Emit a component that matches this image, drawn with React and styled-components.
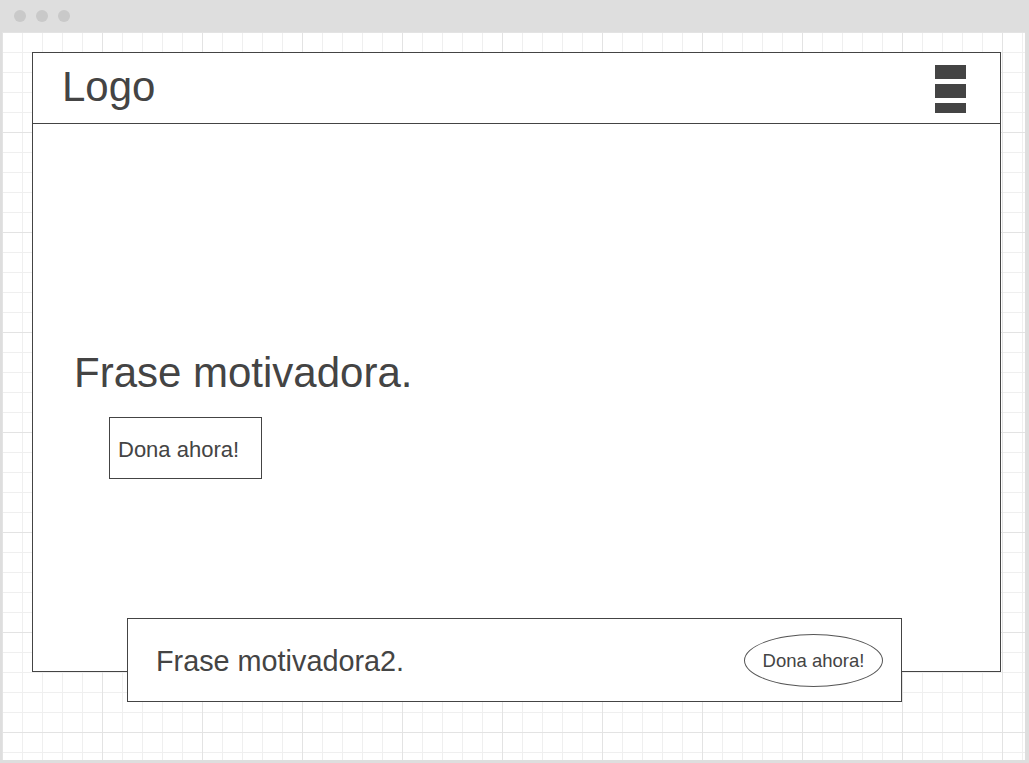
import React from 'react';
import styled, { createGlobalStyle } from 'styled-components';

const GlobalStyle = createGlobalStyle`
  html, body {
    margin: 0;
    padding: 0;
    background: #fff;
  }
  body {
    font-family: 'Liberation Sans', Arial, sans-serif;
    color: #444;
  }
`;

const Window = styled.div`
  width: 1029px;
  height: 763px;
  display: flex;
  flex-direction: column;
  box-sizing: border-box;
  overflow: hidden;
`;

const TitleBar = styled.div`
  height: 32px;
  flex-shrink: 0;
  background: #dedede;
  display: flex;
  align-items: center;
  gap: 10px;
  padding-left: 14px;
`;

const Dot = styled.span`
  width: 12px;
  height: 12px;
  border-radius: 50%;
  background: #c9c9c9;
`;

const Canvas = styled.div`
  flex: 1;
  border: solid #dedede;
  border-width: 0 4px 3px 2px;
  padding: 20px 0 0 30px;
  background-color: #fff;
  background-image:
    linear-gradient(to right, #e3e3e3 1px, transparent 1px),
    linear-gradient(to bottom, #e3e3e3 1px, transparent 1px),
    linear-gradient(to right, #efefef 1px, transparent 1px),
    linear-gradient(to bottom, #efefef 1px, transparent 1px);
  background-size: 100px 100px, 100px 100px, 20px 20px, 20px 20px;
  background-position: 0 0;
`;

const MainBox = styled.div`
  width: 969px;
  height: 620px;
  box-sizing: border-box;
  border: 1px solid #444;
  background: #fff;
  display: flex;
  flex-direction: column;
`;

const Header = styled.header`
  height: 70px;
  border-bottom: 1px solid #444;
  display: flex;
  align-items: center;
  justify-content: space-between;
  padding: 0 34px 0 29px;
`;

const Logo = styled.div`
  font-size: 42px;
  margin-bottom: 2px;
  color: #444;
`;

const Burger = styled.div`
  display: flex;
  flex-direction: column;
  gap: 5px;
  width: 31px;
  margin-top: 2px;
`;

const Bar = styled.span`
  display: block;
  height: ${p => p.$h}px;
  background: #444;
`;

const Hero = styled.section`
  flex: 1;
  padding: 225px 0 0 41px;
  display: flex;
  flex-direction: column;
  align-items: flex-start;
`;

const HeroTitle = styled.h1`
  margin: 0;
  font-size: 42px;
  font-weight: normal;
  color: #444;
`;

const BoxButton = styled.button`
  margin: 20px 0 0 35px;
  width: 153px;
  height: 62px;
  box-sizing: border-box;
  border: 1px solid #444;
  background: #fff;
  padding: 3px 0 0 8px;
  text-align: left;
  font-family: 'Liberation Sans', Arial, sans-serif;
  font-size: 22px;
  color: #444;
`;

const Card = styled.div`
  position: relative;
  z-index: 1;
  margin: -54px 0 0 95px;
  width: 775px;
  height: 84px;
  box-sizing: border-box;
  border: 1px solid #444;
  background: #fff;
  display: flex;
  align-items: center;
  justify-content: space-between;
  padding: 2px 18px 0 28px;
`;

const CardText = styled.p`
  margin: 0;
  font-size: 28.8px;
  color: #444;
`;

const OvalButton = styled.button`
  width: 139px;
  height: 53px;
  margin-top: -2px;
  box-sizing: border-box;
  border: 1px solid #555;
  border-radius: 50%;
  background: #fff;
  font-family: 'Liberation Sans', Arial, sans-serif;
  font-size: 18.5px;
  color: #444;
  padding: 2px 0 0;
`;

export default function App() {
  return (
    <>
      <GlobalStyle />
      <Window>
        <TitleBar>
          <Dot />
          <Dot />
          <Dot />
        </TitleBar>
        <Canvas>
          <MainBox>
            <Header>
              <Logo>Logo</Logo>
              <Burger>
                <Bar $h={14} />
                <Bar $h={14} />
                <Bar $h={10} />
              </Burger>
            </Header>
            <Hero>
              <HeroTitle>Frase motivadora.</HeroTitle>
              <BoxButton>Dona ahora!</BoxButton>
            </Hero>
          </MainBox>
          <Card>
            <CardText>Frase motivadora2.</CardText>
            <OvalButton>Dona ahora!</OvalButton>
          </Card>
        </Canvas>
      </Window>
    </>
  );
}
